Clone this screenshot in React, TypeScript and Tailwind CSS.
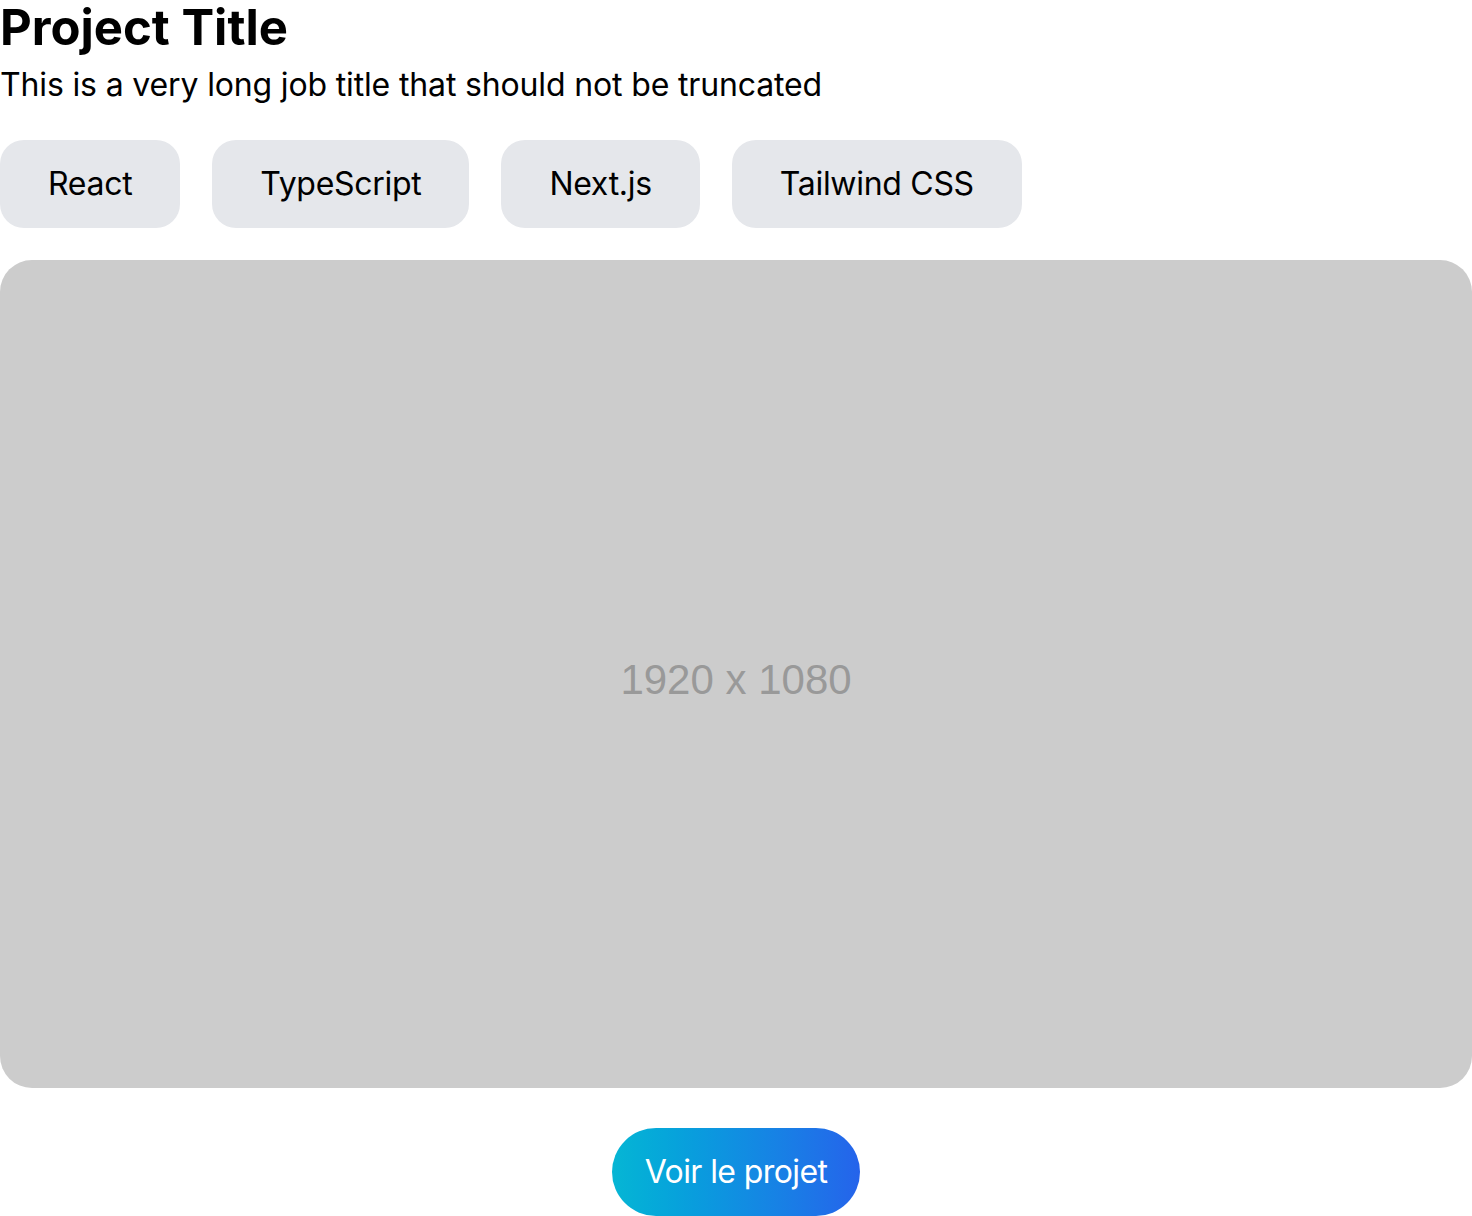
export default function App() {
  const tags = ["React", "TypeScript", "Next.js", "Tailwind CSS"];

  return (
    <div className="w-[1472px] bg-white font-['Inter',sans-serif] text-black">
      <h1 className="text-[49px] font-bold leading-[56px]">Project Title</h1>
      <p className="mt-[9px] text-[32px] leading-[40px] tracking-[-0.15px]">
        This is a very long job title that should not be truncated
      </p>

      <div className="mt-[35px] flex gap-8">
        {tags.map((tag) => (
          <span
            key={tag}
            className="rounded-[24px] bg-[#e5e7eb] px-12 py-6 text-[32px] leading-[40px] tracking-[-0.3px]"
          >
            {tag}
          </span>
        ))}
      </div>

      <div className="mt-8 flex h-[828px] items-center justify-center rounded-[32px] bg-[#cccccc]">
        <span className="pt-[10px] font-['Liberation_Sans',Arial,sans-serif] text-[42px] text-[#999999]">
          1920 x 1080
        </span>
      </div>

      <div className="mt-10 flex justify-center">
        <button className="h-[88px] w-[248px] rounded-full bg-gradient-to-r from-[#06b6d4] to-[#2563eb] text-[32px] leading-[40px] tracking-[-0.6px] text-white">
          Voir le projet
        </button>
      </div>
    </div>
  );
}
